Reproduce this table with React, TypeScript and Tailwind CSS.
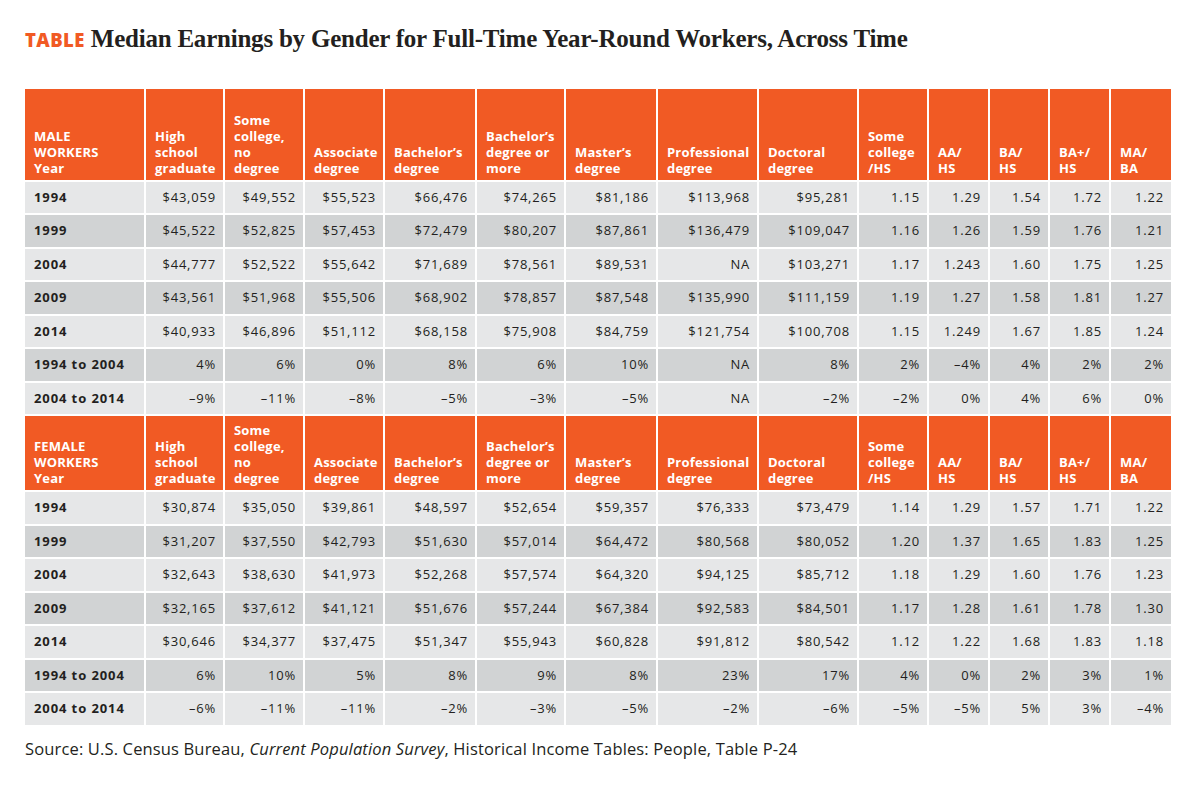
import * as React from "react";

// ─── Data ────────────────────────────────────────────────────────────────────

const COLUMNS: string[][] = [
  ["High", "school", "graduate"],
  ["Some", "college,", "no", "degree"],
  ["Associate", "degree"],
  ["Bachelor’s", "degree"],
  ["Bachelor’s", "degree or", "more"],
  ["Master’s", "degree"],
  ["Professional", "degree"],
  ["Doctoral", "degree"],
  ["Some", "college", "/HS"],
  ["AA/", "HS"],
  ["BA/", "HS"],
  ["BA+/", "HS"],
  ["MA/", "BA"],
];

type Row = [string, ...string[]];

const MALE: Row[] = [
  ["1994", "$43,059", "$49,552", "$55,523", "$66,476", "$74,265", "$81,186", "$113,968", "$95,281", "1.15", "1.29", "1.54", "1.72", "1.22"],
  ["1999", "$45,522", "$52,825", "$57,453", "$72,479", "$80,207", "$87,861", "$136,479", "$109,047", "1.16", "1.26", "1.59", "1.76", "1.21"],
  ["2004", "$44,777", "$52,522", "$55,642", "$71,689", "$78,561", "$89,531", "NA", "$103,271", "1.17", "1.243", "1.60", "1.75", "1.25"],
  ["2009", "$43,561", "$51,968", "$55,506", "$68,902", "$78,857", "$87,548", "$135,990", "$111,159", "1.19", "1.27", "1.58", "1.81", "1.27"],
  ["2014", "$40,933", "$46,896", "$51,112", "$68,158", "$75,908", "$84,759", "$121,754", "$100,708", "1.15", "1.249", "1.67", "1.85", "1.24"],
  ["1994 to 2004", "4%", "6%", "0%", "8%", "6%", "10%", "NA", "8%", "2%", "–4%", "4%", "2%", "2%"],
  ["2004 to 2014", "–9%", "–11%", "–8%", "–5%", "–3%", "–5%", "NA", "–2%", "–2%", "0%", "4%", "6%", "0%"],
];

const FEMALE: Row[] = [
  ["1994", "$30,874", "$35,050", "$39,861", "$48,597", "$52,654", "$59,357", "$76,333", "$73,479", "1.14", "1.29", "1.57", "1.71", "1.22"],
  ["1999", "$31,207", "$37,550", "$42,793", "$51,630", "$57,014", "$64,472", "$80,568", "$80,052", "1.20", "1.37", "1.65", "1.83", "1.25"],
  ["2004", "$32,643", "$38,630", "$41,973", "$52,268", "$57,574", "$64,320", "$94,125", "$85,712", "1.18", "1.29", "1.60", "1.76", "1.23"],
  ["2009", "$32,165", "$37,612", "$41,121", "$51,676", "$57,244", "$67,384", "$92,583", "$84,501", "1.17", "1.28", "1.61", "1.78", "1.30"],
  ["2014", "$30,646", "$34,377", "$37,475", "$51,347", "$55,943", "$60,828", "$91,812", "$80,542", "1.12", "1.22", "1.68", "1.83", "1.18"],
  ["1994 to 2004", "6%", "10%", "5%", "8%", "9%", "8%", "23%", "17%", "4%", "0%", "2%", "3%", "1%"],
  ["2004 to 2014", "–6%", "–11%", "–11%", "–2%", "–3%", "–5%", "–2%", "–6%", "–5%", "–5%", "5%", "3%", "–4%"],
];

// ─── Pieces ──────────────────────────────────────────────────────────────────

function HeaderRow({ label, tall }: { label: string; tall?: boolean }) {
  const h = tall ? "h-[91px]" : "h-[74px]";
  return (
    <>
      {[[label, "WORKERS", "Year"], ...COLUMNS].map((lines, i) => (
        <div
          key={i}
          className={`${h} flex flex-col justify-end bg-[#f15a24] pl-[9px] pr-1 pb-[4px] text-[13px] font-bold leading-[16px] tracking-[0.2px] text-white`}
        >
          {lines.map((l) => (
            <span key={l} className="whitespace-nowrap">
              {l}
            </span>
          ))}
        </div>
      ))}
    </>
  );
}

function DataRows({ rows }: { rows: Row[] }) {
  return (
    <>
      {rows.map((row, r) => {
        const bg = r % 2 === 0 ? "bg-[#e6e7e8]" : "bg-[#d1d3d4]";
        return row.map((cell, c) =>
          c === 0 ? (
            <div
              key={`${r}-${c}`}
              className={`${bg} flex h-[31.5px] items-center pl-[9px] text-[13px] font-bold tracking-[0.9px]`}
            >
              {cell}
            </div>
          ) : (
            <div
              key={`${r}-${c}`}
              className={`${bg} flex h-[31.5px] items-center justify-end pr-[7px] text-[13px] tracking-[0.8px]`}
            >
              {cell}
            </div>
          )
        );
      })}
    </>
  );
}

// ─── Page ────────────────────────────────────────────────────────────────────

export default function App() {
  return (
    <div className="h-[787px] w-[1200px] bg-white pl-[25px] pt-[20px] text-[#231f20] [font-family:'Open_Sans',sans-serif]">
      <h1 className="flex items-baseline gap-[6px]">
        <span className="text-[18.5px] font-extrabold tracking-[0.4px] text-[#f15a24]">TABLE</span>
        <span className="text-[25px] font-bold tracking-[-0.22px] [font-family:'Liberation_Serif',serif]">
          Median Earnings by Gender for Full-Time Year-Round Workers, Across Time
        </span>
      </h1>

      <div className="mt-[31px] grid w-[1146px] grid-cols-[119px_77px_78px_78px_90px_87px_90px_99px_98px_68px_59px_58px_59px_60px] gap-[2px]">
        <HeaderRow label="MALE" tall />
        <DataRows rows={MALE} />
        <HeaderRow label="FEMALE" />
        <DataRows rows={FEMALE} />
      </div>

      <p className="mt-[12px] text-[16.5px] tracking-[0.15px]">
        Source: U.S. Census Bureau, <em>Current Population Survey</em>, Historical Income Tables: People, Table P-24
      </p>
    </div>
  );
}
